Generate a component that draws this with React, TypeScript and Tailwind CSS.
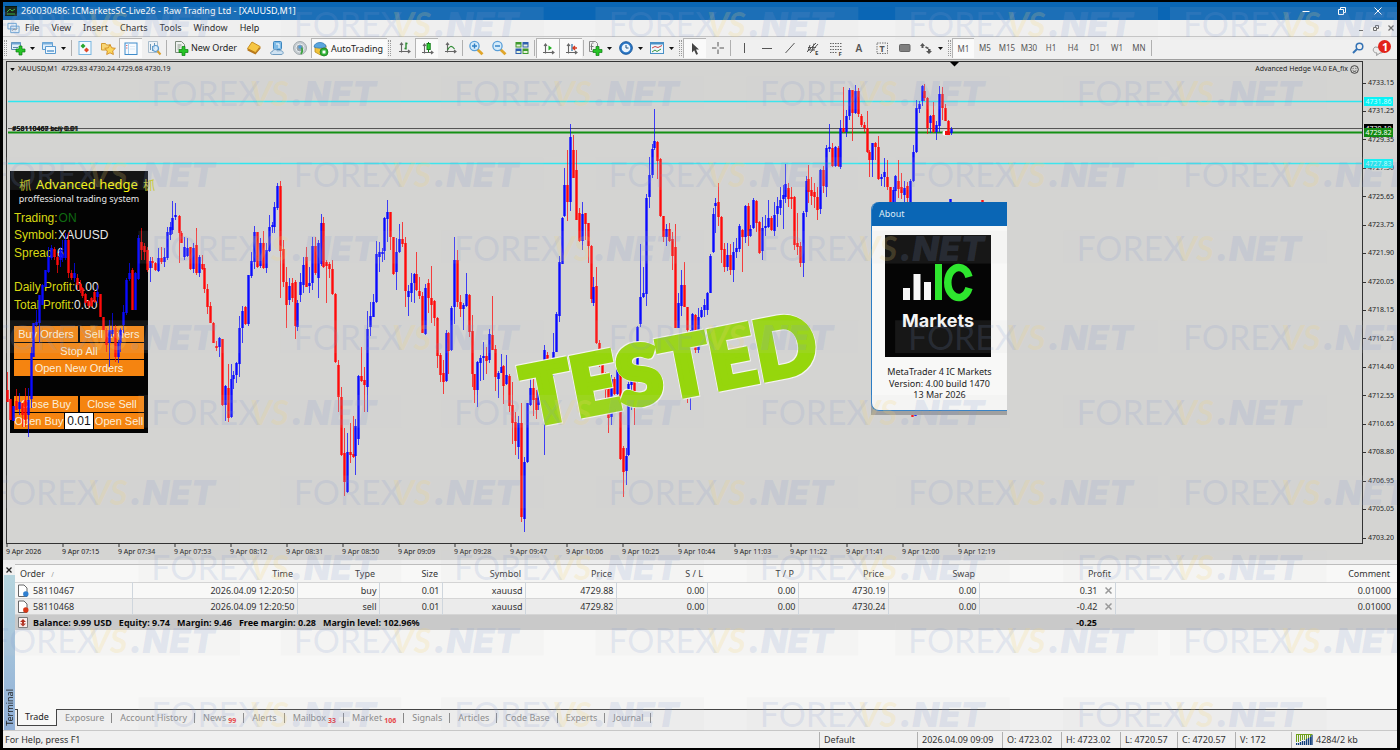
import React from "react";

/* x, high, low, body top, body bottom, direction (u = rising, d = falling) */
const CANDLES = `
7 372 402 390 402 d;10 399 420 399 420 d;13 406 421 406 421 u;16 389 410 401 410 d;19 393 415 402 409 u;22 403 427 403 415 d;25 388 427 400 420 d;28 388 437 400 415 u;
31 347 408 353 399 u;33 323 357 323 357 u;36 310 327 322 325 u;39 295 343 295 323 u;42 284 305 285 305 u;45 270 287 270 287 u;48 247 273 257 272 u;51 245 260 248 258 u;
54 247 260 249 257 d;57 253 273 257 265 d;60 247 267 250 260 u;62 240 262 254 258 u;65 233 260 240 258 u;68 232 278 240 273 d;71 270 280 273 278 d;74 263 282 273 278 u;
77 274 290 278 285 d;80 280 293 284 290 d;82 287 298 288 296 d;85 293 305 294 303 d;88 300 308 301 306 d;91 297 307 298 306 d;94 290 303 292 302 d;97 285 303 292 297 u;
100 294 317 294 317 d;103 317 330 317 330 d;106 328 352 330 345 d;109 320 367 330 343 u;112 313 337 330 334 u;115 325 362 328 357 d;118 340 363 343 357 u;120 328 352 330 343 u;
123 305 333 312 325 u;126 278 315 280 313 u;129 263 281 273 279 u;132 268 310 270 310 d;135 272 310 273 310 u;138 235 280 238 279 u;141 228 260 242 250 d;144 243 260 246 252 d;
147 247 272 250 270 d;150 257 282 261 268 u;152 257 268 261 263 d;155 262 271 263 270 d;158 248 272 258 271 u;161 247 264 258 262 d;164 248 267 257 262 u;167 227 260 232 258 u;
170 222 240 227 235 u;172 201 234 218 230 u;175 203 220 215 217 u;179 215 263 216 233 d;181 231 243 233 243 d;184 237 260 247 257 u;187 238 257 248 256 u;190 247 270 247 269 d;
193 243 273 248 269 u;196 228 275 245 273 d;199 255 277 257 273 u;202 255 270 264 269 d;204 264 293 268 289 d;207 284 314 289 307 d;210 302 323 306 323 d;213 322 343 323 343 d;
216 341 351 346 348 d;219 337 357 338 347 u;222 339 406 339 405 d;225 385 421 386 405 u;228 364 422 388 418 d;231 364 418 379 417 u;233 371 389 375 379 u;236 362 383 363 375 u;
239 316 377 328 364 u;242 306 343 311 328 u;245 306 325 307 324 d;248 275 326 275 324 u;251 252 278 261 276 u;254 226 269 232 262 u;257 232 268 232 267 d;260 238 268 243 266 u;
263 231 269 243 268 d;266 243 273 250 268 u;269 215 252 227 251 u;272 222 233 225 227 u;274 202 233 207 227 u;277 183 210 186 208 u;280 181 298 186 251 d;283 240 287 249 282 d;
286 267 328 282 305 d;289 278 305 286 300 u;292 278 302 283 298 d;295 280 339 282 326 d;297 300 331 303 327 u;300 273 302 282 295 u;303 257 293 265 285 u;306 247 287 257 287 d;
309 267 293 283 286 u;312 237 290 246 283 u;315 237 275 246 273 d;318 240 298 243 278 u;321 214 266 223 264 u;323 217 268 223 267 d;326 260 303 262 266 d;329 262 278 264 269 d;
332 260 295 269 294 d;335 293 363 294 362 d;338 360 412 365 397 d;341 387 456 397 455 d;344 428 496 453 482 d;347 433 493 452 492 u;350 423 463 452 455 d;353 416 458 454 457 d;
355 419 475 426 456 u;358 375 445 376 439 u;361 347 382 376 381 d;364 367 412 380 385 d;367 311 412 329 387 u;370 302 336 316 327 u;373 294 317 302 317 u;376 241 303 254 302 u;
379 242 272 252 257 u;382 248 262 252 254 u;384 217 260 218 251 u;387 200 242 212 219 u;390 212 250 212 237 d;393 237 275 237 274 d;396 238 290 252 272 u;399 224 253 239 252 u;
402 222 247 239 244 d;405 237 307 243 291 d;408 285 316 291 297 u;411 273 302 283 293 u;414 273 303 274 283 u;416 252 291 274 290 d;419 277 299 291 296 d;422 292 333 296 333 d;
425 284 335 288 334 u;428 279 313 283 298 d;431 266 323 298 305 d;434 300 326 301 318 d;437 317 368 318 356 d;440 353 382 355 375 d;443 360 394 373 382 d;446 330 382 333 381 u;
448 332 374 333 351 d;451 306 351 308 350 u;454 237 324 260 307 u;457 250 307 260 302 d;460 295 317 302 309 d;463 303 330 305 309 u;466 273 307 294 306 u;469 294 337 295 332 d;
472 315 387 331 374 d;474 374 403 374 390 d;477 361 407 362 390 u;480 355 381 358 363 u;483 342 380 356 358 u;486 347 374 356 361 d;489 329 363 334 360 u;492 296 350 335 350 d;
495 345 391 349 377 d;498 371 398 373 379 u;501 354 373 367 373 u;503 365 404 366 386 d;506 355 385 375 384 u;509 374 412 376 406 d;512 382 444 405 423 d;515 412 455 422 441 d;
518 416 459 423 447 u;521 403 522 423 517 d;524 457 532 462 519 u;527 403 463 403 462 u;530 377 406 388 405 u;533 377 416 388 400 d;536 390 419 398 410 d;538 380 410 385 405 u;
544 345 455 350 380 u;547 352 372 355 370 d;550 358 375 371 375 d;553 333 385 352 372 u;556 312 352 314 352 u;559 256 322 262 316 u;562 217 264 218 264 u;564 168 217 185 216 u;
567 150 221 185 202 d;570 124 211 137 202 u;573 135 178 150 178 d;576 150 220 170 220 d;579 208 242 213 241 d;582 202 250 214 241 u;585 213 240 213 224 d;588 223 263 223 246 d;
591 245 303 246 299 d;593 277 306 287 303 u;596 267 344 286 343 d;599 340 367 343 362 d;602 362 385 362 378 d;605 372 398 378 390 d;608 387 433 387 418 d;611 375 425 379 417 u;
614 377 395 379 394 d;617 365 395 367 394 u;620 366 460 367 459 d;623 446 497 448 472 d;626 448 485 456 471 u;628 382 456 384 455 u;631 375 410 377 385 u;634 375 425 380 393 d;
637 326 383 327 378 u;640 244 327 297 324 u;643 267 298 293 297 u;646 194 306 198 294 u;649 157 208 175 197 u;652 144 178 149 175 u;654 109 150 141 148 u;657 141 179 142 161 d;
660 158 217 159 216 d;663 216 242 216 237 d;666 224 246 229 237 u;669 223 242 229 241 d;672 232 270 239 256 d;675 224 328 247 328 d;678 293 328 303 328 u;681 270 316 285 306 u;
684 262 307 285 307 d;687 307 403 307 330 d;690 330 410 335 345 u;692 313 345 314 335 u;695 314 353 315 350 d;698 308 353 317 350 u;701 307 318 310 317 u;704 299 317 305 310 u;
707 292 315 293 310 u;710 254 293 256 293 u;713 208 253 214 252 u;715 198 233 203 206 u;718 183 226 202 217 d;721 216 263 217 250 d;724 243 272 249 267 d;727 243 271 255 267 u;
730 244 275 255 270 d;733 242 282 252 270 u;736 238 258 248 252 u;739 224 252 226 249 u;742 229 272 230 237 d;745 205 243 206 237 u;748 203 246 206 236 d;750 225 237 229 236 u;
753 198 229 200 228 u;756 200 232 201 223 d;759 221 254 222 253 d;762 217 260 228 251 u;765 215 236 226 228 u;768 200 228 218 227 u;771 216 231 218 230 d;774 202 236 215 231 u;
777 197 227 206 214 u;780 187 215 200 208 u;783 185 229 195 199 u;785 164 203 184 197 u;788 183 207 188 199 d;791 187 209 197 199 d;794 196 250 197 245 d;797 213 255 243 247 d;
800 242 267 246 263 d;803 211 277 213 263 u;806 176 217 181 212 u;808 165 203 179 192 d;811 177 205 190 196 d;814 183 208 192 197 d;817 187 220 197 210 d;820 169 214 170 209 u;
823 166 193 170 186 d;826 145 197 148 187 u;829 124 152 147 149 u;832 143 167 148 166 d;835 146 167 147 166 u;838 146 167 148 166 d;840 120 169 128 167 u;843 87 133 128 132 d;
846 110 137 116 132 u;849 88 120 90 116 u;852 90 141 90 113 d;855 85 114 91 113 u;858 88 117 91 114 d;861 114 127 116 125 d;864 122 132 125 128 d;867 111 153 128 152 d;
869 150 177 152 160 d;872 143 177 143 160 u;875 142 160 143 147 d;878 136 180 147 179 d;881 174 186 177 179 u;884 158 187 172 177 u;887 160 190 177 187 d;890 187 202 187 202 d;
893 187 202 190 202 u;895 175 202 176 191 u;898 160 198 181 189 d;901 173 199 187 193 d;904 181 202 188 195 u;907 182 202 186 198 d;910 179 202 181 202 u;913 145 182 152 181 u;
916 100 153 108 152 u;919 101 113 104 109 u;922 85 106 86 101 u;924 84 101 91 98 d;927 97 134 98 128 d;930 115 133 116 123 u;933 102 133 115 132 d;936 121 140 125 132 u;
939 86 132 94 126 u;942 87 120 94 108 d;945 104 121 108 121 d;948 120 135 121 133 d;951 127 135 129 133 u;912 408 417 408 417 d;915 408 416 408 416 u;950 199 203 199 203 u;982 200 203 200 203 d`
  .trim()
  .split(";")
  .map((row) => {
    const [x, hi, lo, top, bottom, dir] = row.trim().split(" ");
    return { x: +x, hi: +hi, lo: +lo, top: +top, bottom: +bottom, color: dir === "u" ? "#0a0aff" : "#ff0a0a" };
  });

const TIMES = ["9 Apr 2026", "9 Apr 07:15", "9 Apr 07:34", "9 Apr 07:53", "9 Apr 08:12", "9 Apr 08:31", "9 Apr 08:50", "9 Apr 09:09", "9 Apr 09:28", "9 Apr 09:47", "9 Apr 10:06", "9 Apr 10:25", "9 Apr 10:44", "9 Apr 11:03", "9 Apr 11:22", "9 Apr 11:41", "9 Apr 12:00", "9 Apr 12:19"];
const PRICES = ["4733.15", "4731.25", "4729.35", "4727.50", "4725.65", "4723.75", "4721.90", "4720.05", "4718.15", "4716.25", "4714.40", "4712.55", "4710.65", "4708.80", "4706.95", "4705.05", "4703.20"];

type IconProps = { children: React.ReactNode };
const Icon = ({ children }: IconProps) => (
  <svg viewBox="0 0 16 16" className="h-4 w-4 shrink-0" aria-hidden="true">{children}</svg>
);

const Plus = ({ x, y }: { x: number; y: number }) => (
  <path d={`M${x - 1.5} ${y - 4.5}h3v3h3v3h-3v3h-3v-3h-3v-3h3z`} fill="#27c427" stroke="#0b7d12" strokeWidth=".7" />
);
const Axes = () => <path d="M5.500 3v9.500M3 11.500h11M4 5l1.500-2L7 5M12 10l2 1.500-2 1.500" stroke="#666" strokeWidth="1.100" fill="none" />;
const Lens = ({ minus }: { minus?: boolean }) => (
  <Icon>
    <path d="M9.500 9.500l5 4.800" stroke="#e0a52a" strokeWidth="2.800" />
    <circle cx="6.500" cy="6" r="4.600" fill="#d5ecfb" stroke="#5a9fd8" strokeWidth="1.300" />
    <path d={minus ? "M4 6h5" : "M4 6h5M6.500 3.500v5"} stroke="#2f7fc4" strokeWidth="1.400" />
  </Icon>
);

const I = {
  newChart: <Icon><path d="M1.500 2.500h9v7h-9z" fill="#dfeefa" stroke="#5b88ad" /><path d="M1.500 2.500h9v2h-9z" fill="#6ea6d3" /><path d="M3 7.500h5" stroke="#5b88ad" /><Plus x={10.500} y={10.500} /></Icon>,
  profiles: <Icon><path d="M1.500 2.500h10v7h-10z" fill="#dfeefa" stroke="#5b9bd0" /><path d="M1.500 2.500h10v2h-10z" fill="#7cb1dc" /><path d="M4.500 6.500h10v7h-10z" fill="#f1f8fd" stroke="#5b9bd0" /><path d="M6 11h7" stroke="#5b9bd0" strokeWidth="1.500" /></Icon>,
  market: <Icon><rect x="2" y="1.500" width="12" height="13" fill="#f4faff" stroke="#79b6df" /><path d="M6 3.500l2.500 2.500L6 8.500 3.500 6z" fill="#27a52d" /><path d="M9.500 7.500l2.500 2.500-2.500 2.500L7 10z" fill="#e0492a" /></Icon>,
  navigator: <Icon><path d="M1.500 3.500h4l1 1.500h4v5h-9z" fill="#f8d677" stroke="#d39b31" /><path d="M10 4.500l1.700 3.300 3.700.5-2.700 2.600.7 3.600-3.400-1.700-3.300 1.700.6-3.600-2.600-2.600 3.600-.5z" fill="#fbd65b" stroke="#d18b24" strokeWidth=".9" /></Icon>,
  terminal: <Icon><rect x="2" y="2" width="12" height="11.500" fill="#f7fbff" stroke="#3f8ccb" /><path d="M5.500 2v11" stroke="#a8cfee" /><path d="M3.800 4v1M3.800 6.500v1" stroke="#d33" /><path d="M7 5.500h5M7 8h5" stroke="#dcebf7" /></Icon>,
  tester: <Icon><path d="M2.500 1.500h9v11h-9z" fill="#eef3f7" stroke="#a9bdcc" /><path d="M4.500 4v6M6.500 6v5M8.500 3v6" stroke="#6c97b8" /><circle cx="9.500" cy="8.500" r="3" fill="#d9eefc" fillOpacity=".8" stroke="#5b9bd0" strokeWidth="1.200" /><path d="M11.500 11l3 3.500" stroke="#d9a031" strokeWidth="2" /></Icon>,
  order: <Icon><path d="M2.500 1.500h6l3 3v8h-9z" fill="#eef1ee" stroke="#7c8a7c" /><path d="M4.500 5h4M4.500 7h3M4.500 9h2" stroke="#8a988a" /><Plus x={10.500} y={11} /></Icon>,
  editor: <Icon><path d="M1.500 8.500L6 2l8 4.500-4.500 6z" fill="#f6c644" stroke="#c98f1e" /><path d="M1.500 8.500l8 4v2l-8-4zM9.500 14.500l5-6V6.500l-5 6z" fill="#b8781a" /></Icon>,
  options: <Icon><rect x="4.500" y="1.500" width="8" height="8" rx="1" fill="#7fbbe6" stroke="#3d86bf" /><path d="M7 4h3v4" stroke="#fff" fill="none" /><path d="M3.500 14.500c-2.500 0-2.500-3 0-3 .5-2.500 4.500-2.500 5-.5 3-1 6.500 0 5.500 2.500-.3.700-1 1-2 1z" fill="#cfe2f2" stroke="#6f9cc0" /></Icon>,
  radar: <Icon><circle cx="8" cy="8" r="6.500" fill="#c6ccd0" stroke="#a3abb0" /><circle cx="8" cy="8" r="4" fill="#9aa3a9" stroke="#e8eef2" /><path d="M8.500 7c2 1 2.500 4 .5 7" stroke="#3da33f" strokeWidth="1.800" fill="none" /><circle cx="8" cy="7" r="1.700" fill="#4f9bd8" /></Icon>,
  auto: <Icon><path d="M2 4.500L7 2l6 2.500v6L7.500 14 2 11z" fill="#f0c33a" stroke="#bd8d20" strokeWidth=".8" /><path d="M1 6c0-6 12-6 12 0-3 1.500-9 1.500-12 0z" fill="#5aa6de" stroke="#2f78b4" strokeWidth=".7" /><circle cx="11" cy="11" r="4" fill="#2eb135" stroke="#15781b" strokeWidth=".7" /><path d="M9.500 9.500h3v3h-3z" fill="#fff" /></Icon>,
  bars: <Icon><Axes /><path d="M10 2.500v7M8.500 8.500H10M10 3.500h1.500" stroke="#2d8b32" strokeWidth="1.400" /></Icon>,
  candles: <Icon><Axes /><path d="M9.500 1v10" stroke="#157d1b" /><rect x="8" y="2.500" width="3.200" height="6" fill="#2bd12f" stroke="#157d1b" /></Icon>,
  line: <Icon><Axes /><path d="M5.500 10c2-4 4-5 7-1" stroke="#2d8b32" fill="none" strokeWidth="1.200" /></Icon>,
  zoomIn: <Lens />,
  zoomOut: <Lens minus />,
  tile: <Icon><rect x="1.500" y="2" width="6" height="5.500" fill="#3f9a2d" /><rect x="8.500" y="2" width="6" height="5.500" fill="#2e5fae" /><rect x="1.500" y="8.500" width="6" height="5.500" fill="#2e5fae" /><rect x="8.500" y="8.500" width="6" height="5.500" fill="#3f9a2d" /><path d="M2.500 5.500h4M9.500 5.500h4M2.500 12h4M9.500 12h4" stroke="#e6f2da" strokeWidth="2" /></Icon>,
  scroll: <Icon><Axes /><path d="M8.500 4.500L12 7 8.500 9.500z" fill="#20b020" /></Icon>,
  shift: <Icon><Axes /><path d="M9 3v7" stroke="#3777a8" strokeWidth="1.300" /><path d="M14 7h-4M12 5l-2 2 2 2" stroke="#d53a20" strokeWidth="1.400" fill="none" /></Icon>,
  indicator: <Icon><path d="M2.500 1.500h6l2 2v8h-8z" fill="#f2f2f2" stroke="#888" /><path d="M4.500 10V4.500c0-1.500 1-1.500 2-1.500M3.500 6.500h3" stroke="#777" fill="none" /><Plus x={10.500} y={11} /></Icon>,
  clock: <Icon><circle cx="8" cy="8" r="6.300" fill="#2a78c8" stroke="#1a589a" /><circle cx="8" cy="8" r="4.300" fill="#eaf5fe" /><path d="M8 5v3h2.500" stroke="#24527c" fill="none" /></Icon>,
  template: <Icon><rect x="1.500" y="2.500" width="13" height="11" fill="#eef7fd" stroke="#4a90c6" /><path d="M1.500 3.500h13" stroke="#4a90c6" strokeWidth="2" /><path d="M3 8l3-1.500 3 1 4-2" stroke="#c44" fill="none" /><path d="M3 12l3-2 2 1.500 4-2.500" stroke="#3a963c" fill="none" /></Icon>,
  cursor: <Icon><path d="M5 2l7 6.500H9l2 4.500-1.800.8-2-4.500L5 11.500z" fill="#444" /></Icon>,
  cross: <Icon><path d="M8 2v4.500M8 9.500V14M2 8h4.500M9.500 8H14" stroke="#555" /></Icon>,
  vline: <Icon><path d="M8.500 3v10" stroke="#555" /></Icon>,
  hline: <Icon><path d="M3 8.500h10" stroke="#555" /></Icon>,
  trend: <Icon><path d="M3.500 13l9-10" stroke="#555" /></Icon>,
  channel: <Icon><path d="M2 12l9-9M5 13l8-9M3 7.500h8M3 10h7M5 5l-2 6M9 3.500l-2 7" stroke="#555" fill="none" /><text x="10" y="15" fontSize="6" fontWeight="700" fill="#444" fontFamily="Noto Sans, sans-serif">E</text></Icon>,
  fibo: <Icon><path d="M2 3.500h12M2 6.500h12M2 9.500h12M2 12.500h7" stroke="#666" strokeDasharray="1.500 1" /><text x="10.500" y="15.500" fontSize="6" fontWeight="700" fill="#444" fontFamily="Noto Sans, sans-serif">F</text></Icon>,
  text: <Icon><text x="4.500" y="12" fontSize="10" fontWeight="600" fill="#555" fontFamily="Noto Sans, sans-serif">A</text></Icon>,
  label: <Icon><rect x="3" y="3" width="10.500" height="10.500" fill="none" stroke="#777" strokeDasharray="1.500 1" /><text x="5.500" y="12" fontSize="9" fontWeight="700" fill="#555" fontFamily="Noto Sans, sans-serif">T</text></Icon>,
  shape: <Icon><rect x="2.500" y="4.500" width="10.500" height="7" rx="1" fill="#808080" stroke="#666" /></Icon>,
  arrows: <Icon><path d="M4.500 3L7 6H5.500v2h-2V6H2zM11 14l-3-3h2V9h2.500v2H14z" fill="#555" /><path d="M7.500 7l3 1.500" stroke="#555" strokeWidth="1.500" /></Icon>,
};

const Tool = ({ label, pressed, children }: { label: string; pressed?: boolean; children: React.ReactNode }) => (
  <button type="button" aria-label={label} className={pressed ? "flex h-5 w-[23px] shrink-0 items-center justify-center border-t border-l border-[#b4b4b4] bg-[#fafafa]" : "flex h-5 w-[23px] shrink-0 items-center justify-center"}>
    {children}
  </button>
);
const DropTool = ({ label, children }: { label: string; children: React.ReactNode }) => (
  <button type="button" aria-label={label} className="flex h-5 w-[31px] shrink-0 items-center gap-1 pl-[2px]">
    {children}
    <svg viewBox="0 0 5 3" className="h-[3px] w-[5px]" aria-hidden="true"><path d="M0 0h5L2.500 3z" fill="#111" /></svg>
  </button>
);
const Sep = () => <span className="mx-px h-4 w-px shrink-0 bg-[#b0b0b0]" />;
const Grip = () => <span className="mx-px h-4 w-[3px] shrink-0 border-x border-dotted border-[#9a9a9a]" />;

const Mark = ({ x, y }: { x: number; y: number }) => (
  <g transform={`translate(${x} ${y})`}>
    <rect x="-16" y="-5" width="264" height="33" fill="#d4d4d4" fillOpacity=".09" />
    <g fill="#8098d0" fillOpacity=".17">
      <text x="-3" y="25" fontFamily="Lato, sans-serif" fontWeight="400" fontSize="34">FOREX</text>
      <text x="137" y="25" fontFamily="Inter, sans-serif" fontWeight="900" fontStyle="italic" fontSize="35">.NET</text>
    </g>
    <text x="96" y="25" fill="#f7d774" fillOpacity=".2" fontFamily="Lato, sans-serif" fontWeight="700" fontStyle="italic" fontSize="34">VS</text>
  </g>
);
const ODD_X = [-10, 295, 611, 912, 1188];
const EVEN_X = [152, 456, 763, 1081];
const MARK_Y = [10, 80, 161, 235, 325, 400, 481, 556, 629, 704];

const Watermark = () => (
  <svg viewBox="0 0 1400 750" preserveAspectRatio="none" className="pointer-events-none absolute inset-0 h-full w-full" aria-hidden="true">
    {MARK_Y.map((y, i) => (i % 2 ? EVEN_X : ODD_X).map((x) => <Mark key={`${x}-${y}`} x={x} y={y} />))}
  </svg>
);

const TitleBar = () => (
  <header className="flex h-[18px] items-center bg-[#0a66b5] pl-[2px] text-white">
    <svg viewBox="0 0 12 10" className="h-[10px] w-3" aria-hidden="true"><rect width="12" height="10" fill="#08170b" /><path d="M2 6l3-3 2 2 3-2M2 8h8" stroke="#2fae3c" fill="none" /></svg>
    <h1 className="ml-1 text-[9px]">260030486: ICMarketsSC-Live26 - Raw Trading Ltd - [XAUUSD,M1]</h1>
    <div className="ml-auto flex items-center gap-7 pr-[15px]">
      <button type="button" aria-label="Minimize"><svg viewBox="0 0 8 8" className="h-2 w-2"><path d="M.5 4.500h7" stroke="#fff" /></svg></button>
      <button type="button" aria-label="Restore"><svg viewBox="0 0 8 8" className="h-2 w-2"><path d="M.5 2.500h5v5h-5zM2.500 2V.500h5v5H6" stroke="#fff" fill="none" /></svg></button>
      <button type="button" aria-label="Close"><svg viewBox="0 0 8 8" className="h-2 w-2"><path d="M.5.5l7 7M7.500.500l-7 7" stroke="#fff" /></svg></button>
    </div>
  </header>
);

const MenuBar = () => (
  <nav className="flex h-[17px] items-center border-b border-[#c4c4c4] bg-[#f2f2f2] pl-1 text-[9px] text-[#222]">
    <svg viewBox="0 0 14 12" className="mr-[5px] h-3 w-[13px]" aria-hidden="true"><path d="M1 1h9v6H1zM4 4h9v7H4z" fill="#eaf4fc" stroke="#5d9bd0" /><path d="M5.500 9l2-2 2 1 2-2" stroke="#888" fill="none" /></svg>
    <div className="flex gap-3">
      {["File", "View", "Insert", "Charts", "Tools", "Window", "Help"].map((m) => <button type="button" key={m}>{m}</button>)}
    </div>
    <div className="ml-auto flex items-center gap-[9px] pr-[3px] text-[#666]">
      <button type="button" aria-label="Minimize chart"><svg viewBox="0 0 6 6" className="h-[6px] w-[6px]"><path d="M1 5.500h4" stroke="currentColor" /></svg></button>
      <button type="button" aria-label="Restore chart"><svg viewBox="0 0 6 6" className="h-[6px] w-[6px]"><path d="M.5 2.500h3v3h-3zM2.500 2V.500h3v3H4" stroke="currentColor" fill="none" /></svg></button>
      <button type="button" aria-label="Close chart"><svg viewBox="0 0 6 6" className="h-[6px] w-[6px]"><path d="M.5.500l5 5M5.500.500l-5 5" stroke="currentColor" strokeWidth="1.200" /></svg></button>
    </div>
  </nav>
);

const ToolBar = () => (
  <div className="flex h-[22px] items-center bg-[#f0f0f0] text-[9px] text-[#222]">
    <Grip />
    <DropTool label="New chart">{I.newChart}</DropTool>
    <DropTool label="Profiles">{I.profiles}</DropTool>
    <Sep />
    <Tool label="Market Watch">{I.market}</Tool>
    <Tool label="Navigator">{I.navigator}</Tool>
    <Tool label="Terminal" pressed>{I.terminal}</Tool>
    <Tool label="Strategy Tester">{I.tester}</Tool>
    <Sep />
    <button type="button" className="flex h-5 w-[74px] shrink-0 items-center pl-[5px] whitespace-nowrap">{I.order}<span className="ml-[2px]">New Order</span></button>
    <Tool label="MetaEditor">{I.editor}</Tool>
    <Tool label="Virtual Hosting">{I.options}</Tool>
    <Tool label="Signals">{I.radar}</Tool>
    <button type="button" className="flex h-5 w-[76px] shrink-0 items-center border-t border-l border-[#b4b4b4] bg-[#fafafa] pl-px whitespace-nowrap">{I.auto}<span className="ml-[2px]">AutoTrading</span></button>
    <Grip />
    <Tool label="Bar chart">{I.bars}</Tool>
    <Tool label="Candlesticks" pressed>{I.candles}</Tool>
    <Tool label="Line chart">{I.line}</Tool>
    <Sep />
    <Tool label="Zoom in">{I.zoomIn}</Tool>
    <Tool label="Zoom out">{I.zoomOut}</Tool>
    <Tool label="Tile windows">{I.tile}</Tool>
    <Sep />
    <Tool label="Auto scroll" pressed>{I.scroll}</Tool>
    <Tool label="Chart shift" pressed>{I.shift}</Tool>
    <Sep />
    <DropTool label="Indicators">{I.indicator}</DropTool>
    <DropTool label="Periods">{I.clock}</DropTool>
    <DropTool label="Templates">{I.template}</DropTool>
    <Grip />
    <Tool label="Cursor" pressed>{I.cursor}</Tool>
    <Tool label="Crosshair">{I.cross}</Tool>
    <Sep />
    <Tool label="Vertical line">{I.vline}</Tool>
    <Tool label="Horizontal line">{I.hline}</Tool>
    <Tool label="Trendline">{I.trend}</Tool>
    <Tool label="Equidistant channel">{I.channel}</Tool>
    <Tool label="Fibonacci">{I.fibo}</Tool>
    <Tool label="Text">{I.text}</Tool>
    <Tool label="Text label">{I.label}</Tool>
    <Tool label="Shapes">{I.shape}</Tool>
    <DropTool label="Arrows">{I.arrows}</DropTool>
    <Grip />
    {["M1", "M5", "M15", "M30", "H1", "H4", "D1", "W1", "MN"].map((t) => (
      <button type="button" key={t} className={t === "M1" ? "h-5 w-[22px] shrink-0 border-t border-l border-[#b4b4b4] bg-[#fafafa] text-[8px] text-[#555]" : "h-5 w-[22px] shrink-0 text-[8px] text-[#555]"}>{t}</button>
    ))}
    <Sep />
    <div className="ml-auto flex items-center gap-2 pr-[5px]">
      <button type="button" aria-label="Search"><svg viewBox="0 0 12 12" className="h-3 w-3"><circle cx="7.500" cy="4.500" r="3.300" fill="none" stroke="#3573b5" strokeWidth="1.500" /><path d="M5 7L1 11" stroke="#3573b5" strokeWidth="2" /></svg></button>
      <button type="button" aria-label="Notifications" className="flex">
        <svg viewBox="0 0 20 18" className="h-[18px] w-5"><path d="M3 8c-3 2-2 6 2 6l-.5 2.500L8 14c4 0 5-3 4-5z" fill="#eee" stroke="#999" /><circle cx="12.500" cy="7.500" r="6.500" fill="#e2231a" /><text x="10" y="11.500" fontSize="11" fontWeight="700" fill="#fff" fontFamily="Noto Sans, sans-serif">1</text></svg>
      </button>
    </div>
  </div>
);

const orange = "flex h-4 flex-1 items-center justify-center bg-[#f58410] text-[11px] whitespace-nowrap text-[#fbeeda]";

const HedgePanel = () => (
  <section className="absolute top-[111px] left-[7px] flex w-[138px] flex-col bg-[#030303] px-[4px] pt-[5px] pb-[4px] font-['Liberation_Sans',Arial,sans-serif] text-[12px]">
    <div className="flex h-[18px] items-center gap-[5px] self-start pl-[5px] text-[13px] whitespace-nowrap text-[#f6f60a]">
      <span className="font-['Noto_Sans_CJK_SC',sans-serif] text-[12px] text-[#b4b41c]">枛</span>
      <h2 className="font-['Noto_Sans',sans-serif]">Advanced hedge</h2>
      <span className="font-['Noto_Sans_CJK_SC',sans-serif] text-[12px] text-[#c9c92c]">枛</span>
    </div>
    <p className="h-[13px] text-center font-['Noto_Sans',sans-serif] text-[9px] leading-[9px] whitespace-nowrap text-[#e8e8e8]">proffessional trading system</p>
    <dl className="mt-[2px] text-[#d8d812]">
      <div className="flex h-[17px] items-center gap-[1px]"><dt>Trading:</dt><dd className="text-[#0f6b12]">ON</dd></div>
      <div className="flex h-[18px] items-center gap-[1px]"><dt>Symbol:</dt><dd className="text-[#e8e8e8]">XAUUSD</dd></div>
      <div className="flex h-[17px] items-center gap-[1px]"><dt>Spread:</dt><dd className="text-[#e8e8e8]">6</dd></div>
      <div className="mt-[17px] flex h-[18px] items-center"><dt>Daily Profit:</dt><dd className="text-[#e8e8e8]">0.00</dd></div>
      <div className="flex h-[17px] items-center"><dt>Total Profit:</dt><dd className="text-[#e8e8e8]">0.00</dd></div>
    </dl>
    <div className="mt-[13px] flex flex-col gap-px">
      <div className="flex gap-[2px]"><button type="button" className={orange}>Buy Orders</button><button type="button" className={orange}>Sell Orders</button></div>
      <div className="flex"><button type="button" className={orange}>Stop All</button></div>
      <div className="flex"><button type="button" className={orange}>Open New Orders</button></div>
    </div>
    <div className="mt-[20px] flex flex-col gap-px">
      <div className="flex gap-[2px]"><button type="button" className={orange}>Close Buy</button><button type="button" className={orange}>Close Sell</button></div>
      <div className="flex gap-px"><button type="button" className={orange}>Open Buy</button><input aria-label="Lot size" defaultValue="0.01" className="h-4 w-[28px] bg-white text-center text-[12px] text-[#111]" /><button type="button" className={orange}>Open Sell</button></div>
    </div>
  </section>
);

const AboutDialog = () => (
  <section role="dialog" aria-label="About" className="absolute top-[142px] left-[868px] w-[136px] rounded-tl-lg border-b-4 border-[#9c9c9c] bg-[#9c9c9c]">
    <div className="flex flex-col overflow-hidden rounded-l-lg border-b border-l border-[#2c7dc4] bg-[#f8f8f7] pb-[11px]">
      <h2 className="h-6 bg-[#0a66b5] pl-[7px] text-[9px] leading-6 text-[#dcebf7]">About</h2>
      <svg viewBox="0 0 106 122" className="mt-[9px] ml-[13px] h-[122px] w-[106px]" role="img" aria-label="IC Markets">
        <rect width="106" height="122" fill="#050505" />
        <path d="M18 53h7v12h-7zM28.500 39h7v26h-7zM39 47h7v18h-7z" fill="#f7f7f7" />
        <path d="M50 29h7v36h-7z" fill="#2ee62e" />
        <path d="M84 42a11 15 0 1 0 0 11" stroke="#2ee62e" strokeWidth="7.500" fill="none" />
        <text x="17" y="92" fontFamily="Inter, sans-serif" fontWeight="700" fontSize="18" fill="#f7f7f7">Markets</text>
      </svg>
      <div className="mt-[9px] text-center text-[9px] leading-[12px] text-[#222]">
        <p>MetaTrader 4 IC Markets</p>
        <p>Version: 4.00 build 1470</p>
        <p className="leading-[9px]">13 Mar 2026</p>
      </div>
    </div>
  </section>
);

const Chart = () => (
  <main className="relative flex min-h-[500px] flex-1 flex-col border-t border-[#a0a0a0] bg-[#d4d4d2] font-['Noto_Sans',sans-serif] text-[7px] text-[#222]">
    <div className="flex flex-1">
      <div className="mt-px ml-[3px] flex flex-1 items-start border border-[#333] px-[3px] pt-[2px] leading-[10px]">
        <svg viewBox="0 0 6 4" className="mt-1 mr-[3px] h-[3px] w-[5px]" aria-hidden="true"><path d="M0 0h6L3 4z" fill="#111" /></svg>
        <p>XAUUSD,M1&nbsp; 4729.83 4730.24 4729.68 4730.19</p>
        <p className="ml-auto flex items-center gap-[2px]">Advanced Hedge V4.0 EA_fix
          <svg viewBox="0 0 10 10" className="h-[9px] w-[9px]" aria-hidden="true"><circle cx="5" cy="5" r="4.300" fill="none" stroke="#333" /><path d="M3 6c1 1.500 3 1.500 4 0M3.500 3.200v1M6.500 3.200v1" stroke="#333" fill="none" /></svg>
        </p>
      </div>
      <ol className="flex w-[34px] flex-col justify-between pt-[17px]">
        {PRICES.map((p) => <li key={p} className="flex h-3 items-center gap-[2px]"><span className="h-px w-[3px] bg-[#333]" />{p}</li>)}
      </ol>
    </div>
    <ol className="flex h-4 items-center pl-[3px]">
      {TIMES.map((t) => <li key={t} className="w-14 whitespace-nowrap">{t}</li>)}
    </ol>
    <HedgePanel />
    <svg viewBox="3 60 1394 500" preserveAspectRatio="none" className="pointer-events-none absolute inset-0 h-full w-full" aria-hidden="true">
      <path d="M8 101.500h1354M8 163.500h1354" stroke="#30e6f0" strokeWidth="1.500" />
      <path d="M8 128.500h1354" stroke="#555" />
      <path d="M8 132.500h1354" stroke="#149014" strokeWidth="2" />
      {TIMES.map((t, i) => <path key={t} d={`M${7 + i * 56} 544v3`} stroke="#333" />)}
      <path d="M950 62h9l-4.500 4.500z" fill="#000" />
      {CANDLES.map((c, i) => (
        <g key={i} fill={c.color}>
          <rect x={c.x} y={c.hi} width="1" height={c.lo - c.hi} fillOpacity=".75" />
          <rect x={c.x - .7} y={c.top} width="2.400" height={Math.max(1, c.bottom - c.top)} />
        </g>
      ))}
      <circle cx="945" cy="133" r="2.500" fill="#fff" />
      <path d="M945 131h3l2 1v3h-5z" fill="#f01010" />
      <g fontFamily="Noto Sans, sans-serif" fontSize="7" fontWeight="600" fill="#111">
        <text x="12" y="131">#58110467 buy 0.01</text>
        <text x="12" y="131">#58110468 sell 0.01</text>
      </g>
    </svg>
    <span className="absolute top-[37px] right-1 h-[9px] w-[29px] bg-[#08f2f6] text-center leading-[9px] text-[#c8ffff]">4731.86</span>
    <span className="absolute top-[64px] right-1 h-[9px] w-[29px] bg-black text-center leading-[9px] text-white">4730.19</span>
    <span className="absolute top-[68px] right-1 h-[9px] w-[29px] bg-[#128a12] text-center leading-[9px] text-white">4729.82</span>
    <span className="absolute top-[99px] right-1 h-[9px] w-[29px] bg-[#08f2f6] text-center leading-[9px] text-[#c8ffff]">4727.83</span>
    <AboutDialog />
    <svg viewBox="3 60 1394 500" preserveAspectRatio="none" className="pointer-events-none absolute inset-0 h-full w-full [filter:drop-shadow(1px_1px_0_#f4f4f0)_drop-shadow(-1px_-1px_0_#f4f4f0)]" aria-label="TESTED">
      <text transform="translate(529 426) rotate(-11)" fontFamily="Lato, sans-serif" fontWeight="900" fontSize="81" fill="#96d60c" stroke="#96d60c" strokeWidth="5">TESTED</text>
    </svg>
  </main>
);

const ORDERS = [
  { id: "58110467", type: "buy", open: "4729.88", now: "4730.19", profit: "0.31", dot: "#2f7fd0" },
  { id: "58110468", type: "sell", open: "4729.82", now: "4730.24", profit: "-0.42", dot: "#d93818" },
];
const SUMMARY = ["Balance: 9.99 USD", "Equity: 9.74", "Margin: 9.46", "Free margin: 0.28", "Margin level: 102.96%"];
const cell = "border-r border-[#cfd6dd] pr-[2px]";
const head = "pr-1 font-normal";
const TABS: [string, string?][] = [["Exposure"], ["Account History"], ["News", "99"], ["Alerts"], ["Mailbox", "33"], ["Market", "106"], ["Signals"], ["Articles"], ["Code Base"], ["Experts"], ["Journal"]];

const Terminal = () => (
  <section className="flex h-[170px] border-t-4 border-[#eeeeee] bg-[#f8f8f7] text-[9px] text-[#333]">
    <div className="flex w-3 flex-col items-center bg-[#f0f0f0]">
      <button type="button" aria-label="Close terminal" className="h-[11px]"><svg viewBox="0 0 6 6" className="h-[6px] w-[6px]"><path d="M.5.500l5 5M5.500.500l-5 5" stroke="#222" strokeWidth="1.300" /></svg></button>
      <div className="flex w-[11px] flex-1 items-end justify-center bg-linear-to-b from-[#b6d5de] to-[#8faed6]">
        <span className="rotate-180 pt-1 leading-[11px] text-[#222] [writing-mode:vertical-rl]">Terminal</span>
      </div>
    </div>
    <div className="flex flex-1 flex-col">
      <table className="w-full table-fixed border-t border-[#bdbdbd] text-right leading-[15px]">
        <colgroup>
          <col className="w-[117px]" /><col className="w-[165px]" /><col className="w-[82px]" /><col className="w-[63px]" /><col className="w-[83px]" /><col className="w-[91px]" /><col className="w-[91px]" /><col className="w-[91px]" /><col className="w-[90px]" /><col className="w-[91px]" /><col className="w-[136px]" /><col />
        </colgroup>
        <thead>
          <tr className="h-[18px] border-b border-[#d5d5d5]">
            <th className="pl-[5px] text-left font-normal">Order <span className="pl-1 text-[7px] text-[#999]">/</span></th>
            {["Time", "Type", "Size", "Symbol", "Price", "S / L", "T / P", "Price", "Swap", "Profit"].map((h, i) => <th key={i} className={head}>{h}</th>)}
            <th className="pr-[7px] font-normal">Comment</th>
          </tr>
        </thead>
        <tbody>
          {ORDERS.map((o, i) => (
            <tr key={o.id} className={i ? "h-4 border-b border-[#d5d5d5] bg-[#ebebeb]" : "h-4 border-b border-[#d5d5d5]"}>
              <td className="border-r border-[#cfd6dd] pl-[2px] text-left">
                <div className="flex items-center gap-1">
                  <svg viewBox="0 0 12 13" className="h-[13px] w-3" aria-hidden="true"><path d="M1.500 1h5.500l3 3v8.500h-8.500z" fill="#fff" stroke="#666" /><circle cx="8.800" cy="10" r="2.700" fill={o.dot} /></svg>{o.id}
                </div>
              </td>
              <td className={cell}>2026.04.09 12:20:50</td>
              <td className={cell}>{o.type}</td>
              <td className={cell}>0.01</td>
              <td className={cell}>xauusd</td>
              <td className={cell}>{o.open}</td>
              <td className={cell}>0.00</td>
              <td className={cell}>0.00</td>
              <td className={cell}>{o.now}</td>
              <td className={cell}>0.00</td>
              <td className={cell}>
                <div className="flex items-center justify-end gap-[7px]">{o.profit}
                  <button type="button" aria-label={`Close order ${o.id}`} className="flex h-2 w-2 items-center"><svg viewBox="0 0 7 7" className="h-[7px] w-[7px]"><path d="M.5.500l6 6M6.500.500l-6 6" stroke="#999" strokeWidth="1.500" /></svg></button>
                </div>
              </td>
              <td className="pr-[6px]">0.01000</td>
            </tr>
          ))}
          <tr className="h-[15px] bg-[#c9c9c9] font-bold text-black">
            <td colSpan={10} className="pl-[3px] text-left">
              <div className="flex items-center gap-[5px]">
                <svg viewBox="0 0 10 11" className="h-[11px] w-[10px]" aria-hidden="true"><path d="M.5.500h9v10h-9z" fill="#fbeeee" stroke="#777" /><path d="M5 2L8 5H6v1.500h2L5 9.500 2 6.500h2V5H2z" fill="#b03020" /></svg>
                <div className="flex gap-[7px] whitespace-nowrap">{SUMMARY.map((s) => <span key={s}>{s}</span>)}</div>
              </div>
            </td>
            <td className="pr-[18px]">-0.25</td>
            <td />
          </tr>
        </tbody>
      </table>
      <div className="mt-auto flex h-[21px] items-start border-t border-[#444] bg-[#efefef] pl-[2px] text-[#888]">
        <button type="button" className="-mt-px h-[17px] w-10 border-r border-b border-l border-[#444] bg-[#f8f8f7] text-[#222]">Trade</button>
        {TABS.map(([name, count]) => (
          <div key={name} className="flex h-4 items-center">
            <button type="button" className="flex items-center pr-[7px] pl-2">{name}{count && <sub className="bottom-0 mt-[6px] ml-[2px] text-[7px] leading-[8px] font-bold text-[#e8383a]">{count}</sub>}</button>
            <span className="h-[10px] w-px bg-[#888]" />
          </div>
        ))}
      </div>
    </div>
  </section>
);

const slot = "flex h-4 items-center border-l border-[#b0b0b0] pl-1 whitespace-nowrap";

const StatusBar = () => (
  <footer className="flex h-[18px] items-center border-t border-[#c8c8c8] bg-[#f0f0f0] text-[9px] text-[#333]">
    <p className="flex-1 pl-[2px]">For Help, press F1</p>
    <span className={`${slot} w-[98px]`}>Default</span>
    <span className={`${slot} w-[85px]`}>2026.04.09 09:09</span>
    <span className={`${slot} w-[59px]`}>O: 4723.02</span>
    <span className={`${slot} w-[59px]`}>H: 4723.02</span>
    <span className={`${slot} w-[57px]`}>L: 4720.57</span>
    <span className={`${slot} w-[58px]`}>C: 4720.57</span>
    <span className={`${slot} w-[56px]`}>V: 172</span>
    <span className={`${slot} w-[106px] gap-[3px]`}>
      <svg viewBox="0 0 17 11" className="h-[11px] w-[17px]" aria-hidden="true">
        <path d="M0 .5h16.500M.5 0v8M2.500 0v8M4.500 0v7M6.500 0v6M8.500 0v6M10.500 0v5M12.500 0v4M14.500 0v3" stroke="#6fa01c" />
        <path d="M.5 9v2M2.500 9v2M4.500 8v3M6.500 7v4M8.500 7v4M10.500 5v6M12.500 4v7M14.500 3v8M16 1v10" stroke="#123f7c" strokeWidth="1.300" />
      </svg>
      4284/2 kb
    </span>
  </footer>
);

export default function App() {
  return (
    <div className="relative flex min-h-screen flex-col overflow-hidden border-x-3 border-y-2 border-black bg-[#f0f0f0] font-['Noto_Sans',sans-serif]">
      <TitleBar />
      <MenuBar />
      <ToolBar />
      <Chart />
      <Terminal />
      <StatusBar />
      <Watermark />
    </div>
  );
}
